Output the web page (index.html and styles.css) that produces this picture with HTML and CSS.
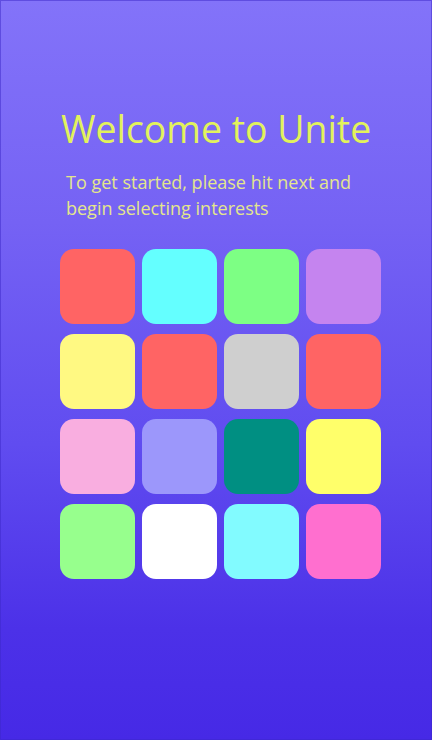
FILE: index.html
```html
<!DOCTYPE html>
<html>
<head>
<meta charset="utf-8">
<link rel="stylesheet" href="styles.css">
</head>
<body>
<main class="screen">
  <h1 class="title">Welcome to Unite</h1>
  <p class="subtitle">To get started, please hit next and begin selecting interests</p>
  <div class="grid">
    <div class="tile c-red"></div>
    <div class="tile c-cyan"></div>
    <div class="tile c-green"></div>
    <div class="tile c-violet"></div>
    <div class="tile c-yellow"></div>
    <div class="tile c-red"></div>
    <div class="tile c-grey"></div>
    <div class="tile c-red"></div>
    <div class="tile c-pink"></div>
    <div class="tile c-periwinkle"></div>
    <div class="tile c-teal"></div>
    <div class="tile c-yellow2"></div>
    <div class="tile c-lime"></div>
    <div class="tile c-white"></div>
    <div class="tile c-aqua"></div>
    <div class="tile c-magenta"></div>
  </div>
</main>
</body>
</html>
```
FILE: styles.css
```css
html, body {
  margin: 0;
  padding: 0;
  width: 432px;
  height: 740px;
  overflow: hidden;
}
body {
  font-family: "Open Sans", "Noto Sans", sans-serif;
}
.screen {
  box-sizing: border-box;
  width: 432px;
  height: 740px;
  background: linear-gradient(180deg, #8373f9 0%, #7562f4 30%, #604cf0 60%, #4c31e8 85%, #4629e6 100%);
  box-shadow: inset 0 0 0 1px rgba(60, 40, 200, 0.5);
  display: flex;
  flex-direction: column;
  padding: 103px 0 0 60px;
}
.title {
  margin: 0 0 0 1px;
  font-size: 37.4px;
  font-weight: 400;
  line-height: 52px;
  color: #e2f25c;
  letter-spacing: 0;
}
.subtitle {
  margin: 14px 0 0 6px;
  width: 310px;
  font-size: 18px;
  line-height: 26px;
  color: #e4e68c;
}
.grid {
  margin-top: 28px;
  display: grid;
  grid-template-columns: repeat(4, 75px);
  grid-auto-rows: 75px;
  column-gap: 7px;
  row-gap: 10px;
}
.tile {
  border-radius: 14px;
}
.c-red { background: #ff6464; }
.c-cyan { background: #64ffff; }
.c-green { background: #7dff84; }
.c-violet { background: #c584ef; }
.c-yellow { background: #fff982; }
.c-grey { background: #cfcfcf; }
.c-pink { background: #f9aee0; }
.c-periwinkle { background: #9c97fb; }
.c-teal { background: #008f82; }
.c-yellow2 { background: #ffff6a; }
.c-lime { background: #97ff8d; }
.c-white { background: #ffffff; }
.c-aqua { background: #82fbff; }
.c-magenta { background: #ff6fcf; }
```
